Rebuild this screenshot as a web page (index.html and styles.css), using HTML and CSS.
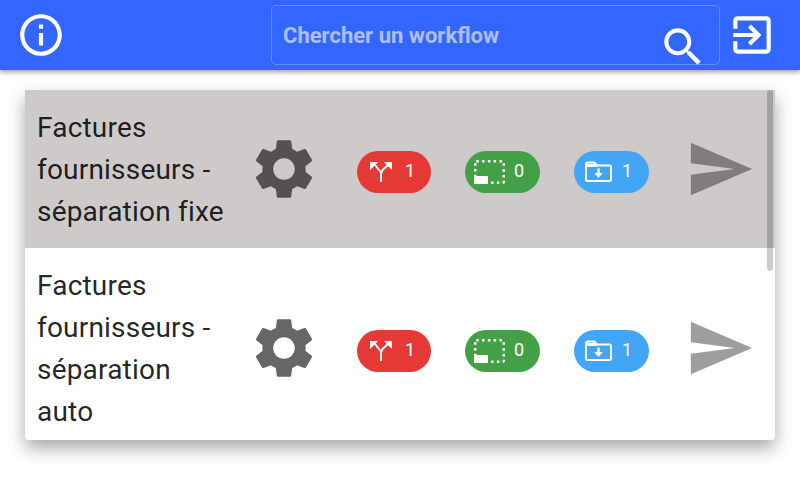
FILE: index.html
```html
<!DOCTYPE html>
<html lang="fr">
<head>
    <meta charset="UTF-8">
    <meta name="viewport" content="width=device-width, initial-scale=1.0">
    <title>Workflows</title>
    <link rel="stylesheet" href="styles.css">
</head>
<body>
    <svg class="sprites" width="0" height="0">
        <symbol id="i-gear" viewBox="0 0 24 24"><path d="M19.14 12.94c.04-.3.06-.61.06-.94 0-.32-.02-.64-.07-.94l2.03-1.58c.18-.14.23-.41.12-.61l-1.92-3.32c-.12-.22-.37-.29-.59-.22l-2.39.96c-.5-.38-1.03-.7-1.62-.94l-.36-2.54c-.04-.24-.24-.41-.48-.41h-3.84c-.24 0-.43.17-.47.41l-.36 2.54c-.59.24-1.13.57-1.62.94l-2.39-.96c-.22-.08-.47 0-.59.22L2.74 8.87c-.12.21-.08.47.12.61l2.03 1.58c-.05.3-.09.63-.09.94s.02.64.07.94l-2.03 1.58c-.18.14-.23.41-.12.61l1.92 3.32c.12.22.37.29.59.22l2.39-.96c.5.38 1.03.7 1.62.94l.36 2.54c.05.24.24.41.48.41h3.84c.24 0 .44-.17.47-.41l.36-2.54c.59-.24 1.13-.56 1.62-.94l2.39.96c.22.08.47 0 .59-.22l1.92-3.32c.12-.22.07-.47-.12-.61l-2.01-1.58zM12 15.6c-1.98 0-3.6-1.62-3.6-3.6s1.62-3.6 3.6-3.6 3.6 1.62 3.6 3.6-1.62 3.6-3.6 3.6z"/></symbol>
        <symbol id="i-send" viewBox="0 0 24 24"><path d="M2.01 21L23 12 2.01 3 2 10l15 2-15 2z"/></symbol>
        <symbol id="i-split" viewBox="0 0 24 22">
            <path d="M12 21v-9.500L6 4M12 12.500l1.500-3.500L19 4" fill="none" stroke="#fff" stroke-width="2"/>
            <path d="M1 1h8L7 3.200 3.200 7 1 9zM23 1h-8l2 2.200L20.800 7 23 9z" fill="#fff"/>
        </symbol>
        <symbol id="i-zone" viewBox="0 0 31 24">
            <rect x="1.250" y="1.250" width="28.500" height="21.500" rx="1" fill="none" stroke="#fff" stroke-width="2.500" stroke-dasharray="2.500 3.300"/>
            <rect x="0" y="16" width="14" height="8" fill="#fff"/>
        </symbol>
        <symbol id="i-folder" viewBox="0 0 27 21">
            <path d="M1 3a1.500 1.500 0 0 1 1.500-1.500h7l2.500 3h12.500A1.500 1.500 0 0 1 26 6v12.500a1.500 1.500 0 0 1-1.500 1.500h-22A1.500 1.500 0 0 1 1 18.500z" fill="none" stroke="#fff" stroke-width="2"/>
            <path d="M1 3h9l2 3H1z" fill="#fff"/>
            <path d="M12.300 7.500h2.400v4.500h3l-4.200 5-4.200-5h3z" fill="#fff"/>
        </symbol>
    </svg>

    <!-- Barre du haut -->
    <header class="topbar">
        <svg class="icon-info" viewBox="0 0 24 24"><path d="M11 7h2v2h-2zm0 4h2v6h-2zm1-9C6.480 2 2 6.480 2 12s4.480 10 10 10 10-4.480 10-10S17.520 2 12 2zm0 18c-4.410 0-8-3.590-8-8s3.590-8 8-8 8 3.590 8 8-3.590 8-8 8z"/></svg>
        <div class="search">
            <span class="search-label">Chercher un workflow</span>
            <svg class="icon-search" viewBox="0 0 24 24"><path d="M15.500 14h-.79l-.28-.27C15.410 12.590 16 11.110 16 9.500 16 5.910 13.090 3 9.500 3S3 5.910 3 9.500 5.910 16 9.500 16c1.610 0 3.090-.59 4.230-1.570l.27.28v.79l5 4.990L20.490 19l-4.990-5zm-6 0C7.010 14 5 11.990 5 9.500S7.010 5 9.500 5 14 7.010 14 9.500 11.990 14 9.500 14z"/></svg>
        </div>
        <svg class="icon-exit" viewBox="0 0 24 24"><path d="M10.090 15.590L11.500 17l5-5-5-5-1.410 1.410L12.670 11H3v2h9.670l-2.580 2.590zM19 3H5c-1.110 0-2 .9-2 2v4h2V5h14v14H5v-4H3v4c0 1.100.89 2 2 2h14c1.100 0 2-.9 2-2V5c0-1.100-.9-2-2-2z"/></svg>
    </header>

    <main class="content">
        <div class="card">
            <div class="thumb"></div>

            <div class="row row-active">
                <div class="row-title">Factures fournisseurs - séparation fixe</div>
                <svg class="icon-gear"><use href="#i-gear"/></svg>
                <span class="pill pill-red"><svg class="pill-split"><use href="#i-split"/></svg><span class="pill-count">1</span></span>
                <span class="pill pill-green"><svg class="pill-zone"><use href="#i-zone"/></svg><span class="pill-count">0</span></span>
                <span class="pill pill-blue"><svg class="pill-folder"><use href="#i-folder"/></svg><span class="pill-count">1</span></span>
                <svg class="icon-send"><use href="#i-send"/></svg>
            </div>

            <div class="row">
                <div class="row-title">Factures fournisseurs - séparation auto</div>
                <svg class="icon-gear"><use href="#i-gear"/></svg>
                <span class="pill pill-red"><svg class="pill-split"><use href="#i-split"/></svg><span class="pill-count">1</span></span>
                <span class="pill pill-green"><svg class="pill-zone"><use href="#i-zone"/></svg><span class="pill-count">0</span></span>
                <span class="pill pill-blue"><svg class="pill-folder"><use href="#i-folder"/></svg><span class="pill-count">1</span></span>
                <svg class="icon-send"><use href="#i-send"/></svg>
            </div>
        </div>
    </main>
</body>
</html>
```

FILE: styles.css
```css
body {
    margin: 0;
    height: 480px;
    overflow: hidden;
    background-color: #fff;
    font-family: Roboto, "Liberation Sans", sans-serif;
}

.sprites {
    position: absolute;
}

/* Barre du haut */
.topbar {
    position: relative;
    z-index: 1;
    display: flex;
    align-items: center;
    height: 70px;
    background-color: #3366ff;
    box-shadow: 0 2px 5px rgba(0, 0, 0, 0.4);
    fill: #fff;
}

.icon-info {
    width: 50px;
    height: 50px;
    margin-left: 16px;
}

.search {
    display: flex;
    box-sizing: border-box;
    width: 449px;
    height: 60px;
    margin-left: 205px;
    padding-left: 11px;
    border: 1px solid rgba(255, 255, 255, 0.25);
    border-radius: 5px;
}

.search-label {
    margin-top: 17px;
    font-size: 22px;
    font-weight: 700;
    line-height: 26px;
    color: rgba(255, 255, 255, 0.6);
}

.icon-search {
    width: 50px;
    height: 50px;
    margin: 16px 11px 0 auto;
}

.icon-exit {
    width: 50px;
    height: 50px;
    margin-left: 7px;
}

/* Liste des workflows */
.content {
    padding: 20px 25px;
}

.card {
    position: relative;
    height: 350px;
    overflow: hidden;
    border-radius: 0 0 4px 4px;
    box-shadow: 0 8px 18px rgba(0, 0, 0, 0.35);
}

.thumb {
    position: absolute;
    top: 0;
    right: 2px;
    width: 6px;
    height: 181px;
    border-radius: 3px;
    background-color: rgba(0, 0, 0, 0.2);
}

.row {
    display: flex;
    align-items: center;
    padding: 16px 18px 16px 12px;
    background-color: #fff;
}

.row-active {
    background-color: #cfcaca;
}

.row-title {
    flex: 0 0 190px;
    margin-right: 9px;
    margin-bottom: -1px;
    padding-top: 1px;
    font-size: 28px;
    letter-spacing: 0.2px;
    line-height: 42px;
    color: rgba(0, 0, 0, 0.87);
}

.icon-gear {
    flex: none;
    width: 72px;
    height: 72px;
    margin-left: 12px;
    margin-right: 3px;
    fill: rgba(0, 0, 0, 0.6);
}

.pill {
    flex: none;
    display: flex;
    align-items: center;
    box-sizing: border-box;
    width: 75px;
    height: 42px;
    margin-top: 5px;
    margin-left: 34px;
    border-radius: 21px;
    font-size: 18px;
    color: #fff;
}

.pill-count {
    margin-bottom: 2px;
}

.pill-red {
    width: 74px;
    background-color: #e53935;
}

.pill-green {
    background-color: #43a047;
}

.pill-blue {
    background-color: #42a5f5;
}

.pill-split {
    width: 24px;
    height: 22px;
    margin-left: 12px;
    margin-right: 12px;
}

.pill-zone {
    width: 31px;
    height: 24px;
    margin-left: 9px;
    margin-right: 9px;
}

.pill-folder {
    width: 27px;
    height: 21px;
    margin-left: 11px;
    margin-right: 10px;
}

.icon-send {
    flex: none;
    width: 70px;
    height: 70px;
    margin-left: 36px;
    fill: rgba(0, 0, 0, 0.38);
}
```
